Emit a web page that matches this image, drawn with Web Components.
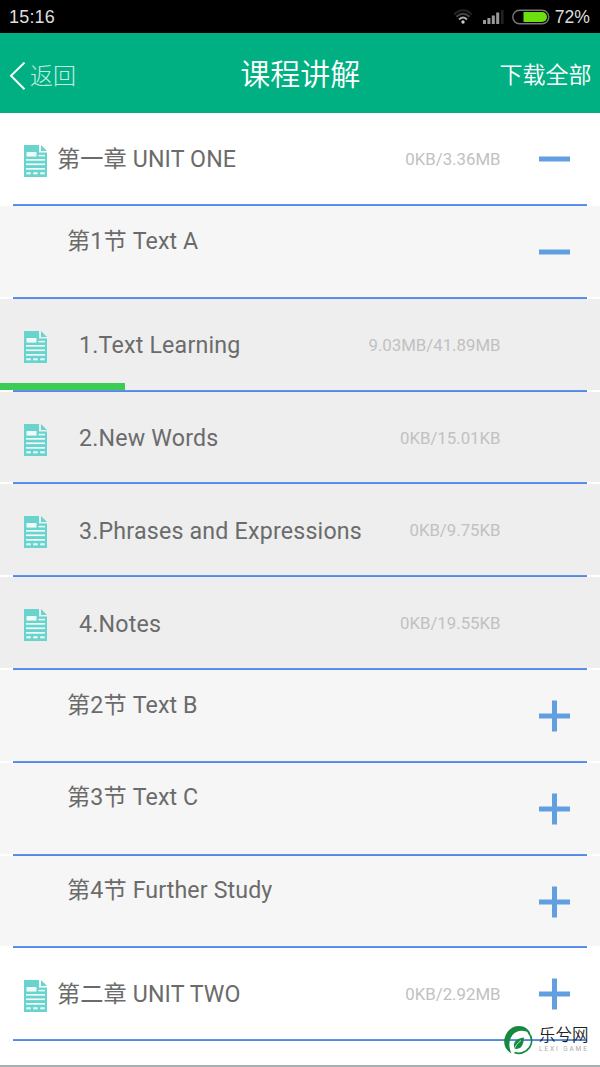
<!DOCTYPE html>
<html lang="zh-CN">
<head>
<meta charset="utf-8">
<title>课程讲解</title>
<style>
  html, body {
    margin: 0;
    height: 1067px;
    overflow: hidden;
    background: #fff;
  }

  body {
    font-family: Roboto, "Noto Sans CJK SC", sans-serif;
    color: #6b6b6b;
  }
</style>
</head>
<body>
<course-page></course-page>

<script>
class StatusBar extends HTMLElement {
  connectedCallback() {
    this.attachShadow({ mode: 'open' });
    this.shadowRoot.innerHTML = `
      <style>
        :host {
          display: flex;
          align-items: center;
          height: 33.3px;
          padding: 0 10px 0 9px;
          box-sizing: border-box;
          background: #000;
          color: #dedede;
          font: 18px/33px "Liberation Sans", Arial, sans-serif;
        }

        .time {
          margin-right: auto;
          padding-top: 2px;
          letter-spacing: .2px;
        }

        .wifi {
          margin-right: 10px;
        }

        .signal {
          margin-right: 8px;
        }

        .battery {
          margin-right: 5px;
        }

        .level {
          padding-top: 2px;
          font-size: 17.6px;
        }

        svg {
          display: block;
        }
      </style>
      <span class="time"><slot name="time"></slot></span>
      <svg class="wifi" width="20" height="17" viewBox="0 0 20 17" fill="none" stroke-width="2">
        <path d="M1.2 6.4Q10-1.8 18.8 6.4" stroke="#242424"/>
        <path d="M3.4 8.8Q10 2.6 16.6 8.8" stroke="#444"/>
        <path d="M6 11.4Q10 7.6 14 11.4" stroke="#aaa"/>
        <circle cx="10" cy="14" r="1.7" fill="#ccc"/>
      </svg>
      <svg class="signal" width="21" height="16" viewBox="0 0 21 16" fill="#999">
        <rect x="0" y="11" width="3" height="4"/>
        <rect x="4.4" y="9" width="3" height="6"/>
        <rect x="8.8" y="6.5" width="3" height="8.5"/>
        <rect x="13.2" y="3.5" width="3" height="11.5"/>
        <rect x="18" y="1" width="2.6" height="14" fill="#222"/>
      </svg>
      <svg class="battery" width="38" height="16" viewBox="0 0 38 16">
        <rect x=".8" y="1.3" width="36" height="13.4" rx="6.7" fill="#000" stroke="#777" stroke-width="1.4"/>
        <path d="M11.5 3H30a5 5 0 0 1 0 10H11.5z" fill="#6ce00f"/>
      </svg>
      <span class="level"><slot name="level"></slot></span>
    `;
  }
}

class TitleBar extends HTMLElement {
  connectedCallback() {
    this.attachShadow({ mode: 'open' });
    this.shadowRoot.innerHTML = `
      <style>
        :host {
          display: grid;
          grid-template-columns: 1fr auto 1fr;
          align-items: center;
          height: 80px;
          padding: 0 8.5px 0 9px;
          box-sizing: border-box;
          background: #01b082;
          color: #fff;
          line-height: 40px;
        }

        .back {
          display: flex;
          align-items: center;
          gap: 4px;
          padding-top: 5px;
          font-size: 23px;
          font-weight: 300;
          color: #c4ede2;
        }

        .back slot {
          display: block;
          padding-top: 3px;
        }

        .title {
          padding-top: 4px;
          font-size: 30px;
          font-weight: 350;
        }

        .action {
          justify-self: end;
          padding-top: 5px;
          font-size: 23px;
          font-weight: 350;
        }
      </style>
      <span class="back">
        <svg width="17" height="28" viewBox="0 0 17 28" fill="none" stroke="#fff" stroke-width="2">
          <path d="M15.5 .6L2 13.8L15.5 27.2"/>
        </svg>
        <slot name="back"></slot>
      </span>
      <span class="title"><slot></slot></span>
      <span class="action"><slot name="action"></slot></span>
    `;
  }
}

class DocIcon extends HTMLElement {
  connectedCallback() {
    this.attachShadow({ mode: 'open' });
    this.shadowRoot.innerHTML = `
      <style>
        :host {
          display: block;
          width: 23px;
          height: 32px;
        }

        svg {
          display: block;
        }
      </style>
      <svg width="23" height="32" viewBox="0 0 23 32">
        <path d="M0 0H15V7.5H23V32H0z" fill="#69d3cd"/>
        <path d="M17 0L23 6H17z" fill="#69d3cd"/>
        <g fill="#fff" fill-opacity=".9">
          <rect x="2.5" y="7" width="10" height="4.6"/>
          <rect x="14.5" y="9.8" width="6.5" height="1.6"/>
          <rect x="2" y="14" width="19" height="1.7"/>
          <rect x="2" y="18.4" width="19" height="1.7"/>
          <rect x="2" y="23" width="19" height="1.7"/>
          <rect x="2.3" y="27.3" width="4.5" height="2"/>
          <rect x="9.2" y="27.3" width="4.5" height="2"/>
          <rect x="16.2" y="27.3" width="4.5" height="2"/>
        </g>
      </svg>
    `;
  }
}

// kind: chapter | section | lesson, toggle: plus | minus
class CourseRow extends HTMLElement {
  connectedCallback() {
    const kind = this.getAttribute('kind');
    const size = this.getAttribute('size') || '';
    const toggle = this.getAttribute('toggle');
    const progress = this.getAttribute('progress');

    this.attachShadow({ mode: 'open' });
    this.shadowRoot.innerHTML = `
      <style>
        :host {
          display: flex;
          flex-direction: column;
          height: 92.8px;
          background: #fff;
        }

        .body {
          position: relative;
          display: grid;
          grid-template-columns: 23px 1fr auto 32px;
          flex: 1;
          padding: 0 30px 0 24px;
          line-height: 30px;
        }

        :host([kind="section"]) .body {
          background: #f6f6f6;
        }

        :host([kind="lesson"]) .body {
          background: #eee;
        }

        doc-icon {
          grid-column: 1;
          margin-top: 32px;
        }

        .name {
          grid-column: 2;
          margin: 31px 0 0 10px;
          font-size: 23.2px;
          letter-spacing: .12px;
          white-space: nowrap;
        }

        :host([kind="section"]) .name {
          margin: 19.5px 0 0 20px;
        }

        :host([kind="lesson"]) .name {
          margin: 31.6px 0 0 32px;
          letter-spacing: .2px;
        }

        .size {
          grid-column: 3;
          margin: 31px 37.5px 0 0;
          font-size: 16.8px;
          color: #c1c1c1;
        }

        .toggle {
          grid-column: 4;
          margin-top: 30px;
        }

        .progress {
          position: absolute;
          left: 0;
          bottom: 0;
          height: 7px;
          background: #3ccb55;
        }

        .line {
          height: 2px;
          margin: 0 13.4px;
          background: linear-gradient(#6a98ea, #4c82e6);
        }
      </style>
      <div class="body">
        ${kind === 'section' ? '' : '<doc-icon></doc-icon>'}
        <span class="name"><slot></slot></span>
        <span class="size">${size}</span>
        ${toggle ? `
        <svg class="toggle" width="32" height="32" viewBox="0 0 32 32" fill="#629fe0">
          <rect x="1" y="13.5" width="31" height="5"/>
          ${toggle === 'plus' ? '<rect x="14" y="0.5" width="5" height="31"/>' : ''}
        </svg>` : ''}
        ${progress ? `<div class="progress" style="width: ${progress}%"></div>` : ''}
      </div>
      <div class="line"></div>
    `;
  }
}

class LexiBadge extends HTMLElement {
  connectedCallback() {
    this.attachShadow({ mode: 'open' });
    this.shadowRoot.innerHTML = `
      <style>
        :host {
          position: absolute;
          left: 503px;
          top: 1025px;
          display: flex;
          gap: 6px;
        }

        .words {
          display: flex;
          flex-direction: column;
          padding-top: 1px;
          white-space: nowrap;
        }

        .cn {
          font-size: 16.5px;
          font-weight: 350;
          line-height: 19px;
          color: #222;
        }

        .en {
          font-size: 6.5px;
          line-height: 9px;
          letter-spacing: 1.9px;
          color: #aaa;
        }
      </style>
      <svg width="30" height="30" viewBox="0 0 30 30">
        <path d="M8.5 28.5C1.5 25 -.5 17 2.5 10.5C5.5 3 13-.5 20 1.5C24 3 26 5.5 27.5 8.5C21 4 13 5 9.5 10C5.5 15.5 5.5 22 8.5 28.5z" fill="#168842"/>
        <path d="M25 7C29.5 12 29.5 18 26.5 22.5C23 27.5 17 29.5 11.5 27.5" fill="none" stroke="#168842" stroke-width="1.8"/>
        <path d="M11.5 24C9.5 17 13 13.5 21 12.5C20.5 20.5 18 24.5 11.5 24z" fill="#168842"/>
        <path d="M11 25.5C12 21 14.5 18 18 15.5" fill="none" stroke="#fff" stroke-width=".7"/>
      </svg>
      <div class="words">
        <span class="cn">乐兮网</span>
        <span class="en">LEXI GAME</span>
      </div>
    `;
  }
}

class CoursePage extends HTMLElement {
  connectedCallback() {
    this.attachShadow({ mode: 'open' });
    this.shadowRoot.innerHTML = `
      <style>
        :host {
          position: relative;
          display: flex;
          flex-direction: column;
          height: 1067px;
          box-sizing: border-box;
          border-bottom: 2px solid #a7afb3;
        }
      </style>
      <status-bar>
        <span slot="time">15:16</span>
        <span slot="level">72%</span>
      </status-bar>
      <title-bar>
        <span slot="back">返回</span>
        课程讲解
        <span slot="action">下载全部</span>
      </title-bar>
      <main>
        <course-row kind="chapter" size="0KB/3.36MB" toggle="minus">第一章 UNIT ONE</course-row>
        <course-row kind="section" toggle="minus">第1节 Text A</course-row>
        <course-row kind="lesson" size="9.03MB/41.89MB" progress="20.9">1.Text Learning</course-row>
        <course-row kind="lesson" size="0KB/15.01KB">2.New Words</course-row>
        <course-row kind="lesson" size="0KB/9.75KB">3.Phrases and Expressions</course-row>
        <course-row kind="lesson" size="0KB/19.55KB">4.Notes</course-row>
        <course-row kind="section" toggle="plus">第2节 Text B</course-row>
        <course-row kind="section" toggle="plus">第3节 Text C</course-row>
        <course-row kind="section" toggle="plus">第4节 Further Study</course-row>
        <course-row kind="chapter" size="0KB/2.92MB" toggle="plus">第二章 UNIT TWO</course-row>
      </main>
      <lexi-badge></lexi-badge>
    `;
  }
}

customElements.define('status-bar', StatusBar);
customElements.define('title-bar', TitleBar);
customElements.define('doc-icon', DocIcon);
customElements.define('course-row', CourseRow);
customElements.define('lexi-badge', LexiBadge);
customElements.define('course-page', CoursePage);
</script>
</body>
</html>
